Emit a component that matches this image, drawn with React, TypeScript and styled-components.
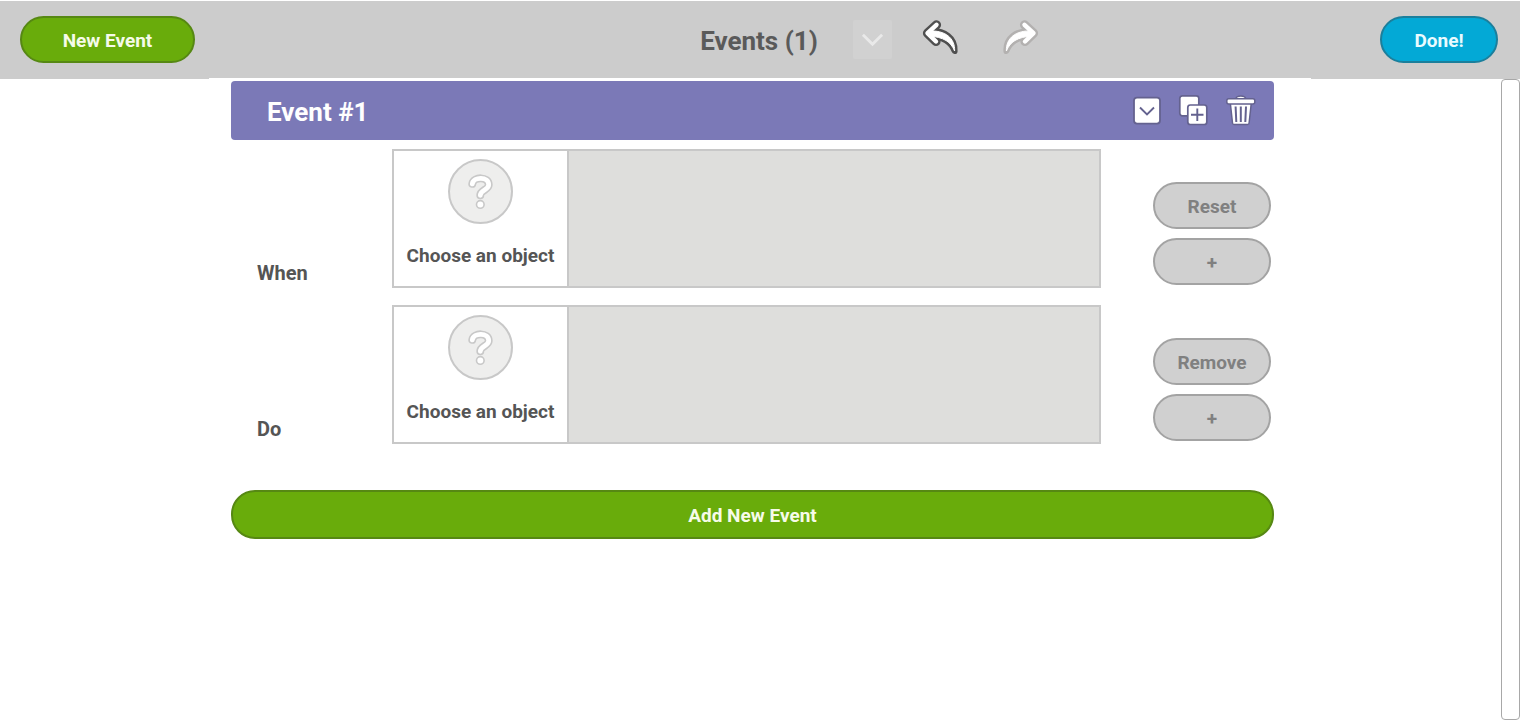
import React from "react";
import styled, { createGlobalStyle } from "styled-components";

const GlobalStyle = createGlobalStyle`
  *, *::before, *::after { box-sizing: border-box; }
  body {
    margin: 0;
    background: #ffffff;
    color: #555555;
    font-family: Roboto, "Liberation Sans", sans-serif;
  }
  button { font-family: inherit; }
`;

const Page = styled.div`
  display: flex;
  flex-direction: column;
  min-height: 100vh;
`;

const TopBar = styled.header`
  display: grid;
  grid-template-columns: 1fr auto 1fr;
  align-items: center;
  height: 79px;
  padding: 0 22px 1px 20px;
  border-top: 1px solid #ffffff;
  background: #cccccc;
`;

const Title = styled.h1`
  margin: 0;
  padding-top: 3px;
  font-size: 26px;
  line-height: 32px;
  font-weight: 700;
  color: #5a5a5a;
`;

const TopActions = styled.div`
  display: flex;
  align-items: center;
  justify-content: space-between;
  padding-left: 35px;
`;

const ToolGroup = styled.div<{ $gap: number }>`
  display: flex;
  align-items: center;
  gap: ${(p) => p.$gap}px;
`;

const tones = {
  green: { fill: "#69ac0b", edge: "#568813", text: "#f6fbe9" },
  blue: { fill: "#03a9d6", edge: "#1b7f9c", text: "#e9fbff" },
  grey: { fill: "#d0d0d0", edge: "#a3a3a3", text: "#808080" },
};

const PillButton = styled.button<{ $tone: keyof typeof tones; $width: string; $tall?: boolean }>`
  width: ${(p) => p.$width};
  height: ${(p) => (p.$tall ? 49 : 47)}px;
  padding: 3px 0 0;
  border: 2px solid ${(p) => tones[p.$tone].edge};
  border-radius: 24px;
  background: ${(p) => tones[p.$tone].fill};
  color: ${(p) => tones[p.$tone].text};
  font-size: 19px;
  line-height: 24px;
  font-weight: 700;
`;

const IconButton = styled.button<{ $size: number; $boxed?: boolean }>`
  display: flex;
  align-items: center;
  justify-content: center;
  width: ${(p) => p.$size}px;
  height: ${(p) => p.$size}px;
  padding: 0;
  border: 0;
  border-radius: 2px;
  background: ${(p) => (p.$boxed ? "#d1d1d1" : "transparent")};
`;

const Body = styled.div`
  display: grid;
  grid-template-columns: 19px 1fr 19px;
  flex: 1;
`;

const Workspace = styled.main`
  grid-column: 2;
  justify-self: center;
  width: 100%;
  max-width: 1102px;
  margin-top: -1px;
  padding: 3px 37px 0 22px;
  background: #ffffff;
`;

const ScrollTrack = styled.div`
  grid-column: 3;
  border: 1px solid #a8a8a8;
  border-radius: 4px;
  background: #ffffff;
`;

const EventHeader = styled.header`
  display: flex;
  align-items: center;
  justify-content: space-between;
  height: 59px;
  padding: 0 17px 1px 36px;
  border-radius: 4px;
  background: #7b79b7;
`;

const EventTitle = styled.h2`
  margin: 0;
  padding-top: 4px;
  font-size: 26px;
  line-height: 32px;
  font-weight: 700;
  color: #ffffff;
`;

const Rules = styled.div`
  display: flex;
  flex-direction: column;
  gap: 17px;
  padding: 9px 3px 46px 26px;
`;

const RuleRow = styled.section`
  display: grid;
  grid-template-columns: 135px 1fr 170px;
  align-items: end;
`;

const RuleLabel = styled.h3`
  margin: 0;
  padding-bottom: 3px;
  font-size: 20px;
  line-height: 24px;
  font-weight: 700;
`;

const RuleBox = styled.div`
  display: flex;
  height: 139px;
  border: 2px solid #c8c8c8;
  background: #dededc;
`;

const ObjectPicker = styled.button`
  display: flex;
  flex-direction: column;
  align-items: center;
  gap: 20px;
  width: 175px;
  padding: 8px 0 0;
  border: 0;
  border-right: 2px solid #c8c8c8;
  background: #ffffff;
  color: #555555;
  font-size: 19px;
  line-height: 24px;
  font-weight: 700;
  white-space: nowrap;
`;

const RuleActions = styled.div`
  display: flex;
  flex-direction: column;
  align-items: flex-end;
  gap: 9px;
  padding-bottom: 3px;
`;

const ArrowIcon = ({ edge, flipped }: { edge: string; flipped?: boolean }) => {
  const head = "M16.5 8.8 L7.5 17.2 L16 25.500";
  const tail = "M9 15 C25 14 35.2 22 34.600 35 C31 26 24 21 9 20 Z";
  return (
    <svg width="41" height="41" viewBox="0 3 41 41" strokeLinecap="round" strokeLinejoin="round" aria-hidden="true">
      <g transform={flipped ? "matrix(-1 0 0 1 41 0)" : undefined}>
        <path d={head} fill="none" stroke={edge} strokeWidth="9.2" />
        <path d={tail} fill={edge} stroke={edge} strokeWidth="6" />
        <path d={head} fill="none" stroke="#fff" strokeWidth="4.4" />
        <path d={tail} fill="#fff" stroke="#fff" strokeWidth="1" />
      </g>
    </svg>
  );
};

const ChevronIcon = () => (
  <svg width="23" height="23" viewBox="0 0 24 24" fill="none" stroke="#e9e9e9" strokeWidth="3" aria-hidden="true">
    <path d="M2 7 L12 17 L22 7" />
  </svg>
);

const CollapseIcon = () => (
  <svg width="32" height="32" viewBox="0 0 32 32" fill="#fff" stroke="#64628f" aria-hidden="true">
    <rect x="3" y="3.600" width="26" height="26" rx="3" strokeWidth="1.800" />
    <path d="M9 13.500 L16 20.500 L23 13.500" fill="none" strokeWidth="1.900" />
  </svg>
);

const DuplicateIcon = () => (
  <svg width="32" height="32" viewBox="0 0 32 32" fill="#fff" stroke="#64628f" strokeWidth="1.700" aria-hidden="true">
    <rect x="1.800" y="1.800" width="19" height="20" rx="2.500" />
    <rect x="9.800" y="11" width="19" height="19.500" rx="2.500" />
    <path d="M19.300 14.500 V27 M13 20.700 H25.500" fill="none" strokeWidth="1.900" />
  </svg>
);

const TrashIcon = () => (
  <svg width="32" height="32" viewBox="0.700 0 32 32" fill="#fff" stroke="#64628f" strokeWidth="1.500" strokeLinejoin="round" aria-hidden="true">
    <path d="M6 9 H27 L24.800 29 Q24.600 30.500 23.300 30.500 H9.700 Q8.400 30.500 8.200 29 Z" />
    <path d="M11.500 5 Q12 2 16.500 2 Q21 2 21.500 5 Z" />
    <rect x="2.500" y="4.800" width="28" height="5.200" rx="2" />
    <path d="M11.300 12.500 L12 28 M16.500 12.500 V28 M21.700 12.500 L21 28" fill="none" strokeWidth="2" />
  </svg>
);

const UnknownObjectIcon = () => {
  const hook = "M24.3 24.8 C25.500 17.500 40.700 17.300 40.700 25.800 C40.700 31 32.300 31 32.300 36.300";
  return (
    <svg width="65" height="65" viewBox="0 0 65 65" aria-hidden="true">
      <circle cx="32.500" cy="32.500" r="31.500" fill="#eeeeed" stroke="#c8c8c8" strokeWidth="2" />
      <g fill="none" strokeLinejoin="round">
        <path d={hook} stroke="#c8c8c8" strokeWidth="8" strokeLinecap="round" />
        <path d={hook} stroke="#fff" strokeWidth="4.800" strokeLinecap="round" />
      </g>
      <circle cx="32.300" cy="45.400" r="3.800" fill="#fff" stroke="#c8c8c8" strokeWidth="1.600" />
    </svg>
  );
};

const Rule = ({ label, action }: { label: string; action: string }) => (
  <RuleRow>
    <RuleLabel>{label}</RuleLabel>
    <RuleBox>
      <ObjectPicker type="button">
        <UnknownObjectIcon />
        Choose an object
      </ObjectPicker>
    </RuleBox>
    <RuleActions>
      <PillButton type="button" $tone="grey" $width="118px">{action}</PillButton>
      <PillButton type="button" $tone="grey" $width="118px">+</PillButton>
    </RuleActions>
  </RuleRow>
);

export default function App() {
  return (
    <Page>
      <GlobalStyle />
      <TopBar>
        <PillButton type="button" $tone="green" $width="175px">New Event</PillButton>
        <Title>Events (1)</Title>
        <TopActions>
          <ToolGroup $gap={28}>
            <IconButton type="button" $size={39} $boxed aria-label="Show all events">
              <ChevronIcon />
            </IconButton>
            <ToolGroup $gap={39}>
              <IconButton type="button" $size={41} aria-label="Undo">
                <ArrowIcon edge="#505050" />
              </IconButton>
              <IconButton type="button" $size={41} aria-label="Redo">
                <ArrowIcon edge="#b3b1b0" flipped />
              </IconButton>
            </ToolGroup>
          </ToolGroup>
          <PillButton type="button" $tone="blue" $width="118px">Done!</PillButton>
        </TopActions>
      </TopBar>
      <Body>
        <Workspace>
          <EventHeader>
            <EventTitle>Event #1</EventTitle>
            <ToolGroup $gap={15}>
              <IconButton type="button" $size={32} aria-label="Collapse event">
                <CollapseIcon />
              </IconButton>
              <IconButton type="button" $size={32} aria-label="Duplicate event">
                <DuplicateIcon />
              </IconButton>
              <IconButton type="button" $size={32} aria-label="Delete event">
                <TrashIcon />
              </IconButton>
            </ToolGroup>
          </EventHeader>
          <Rules>
            <Rule label="When" action="Reset" />
            <Rule label="Do" action="Remove" />
          </Rules>
          <PillButton type="button" $tone="green" $width="100%" $tall>Add New Event</PillButton>
        </Workspace>
        <ScrollTrack />
      </Body>
    </Page>
  );
}
